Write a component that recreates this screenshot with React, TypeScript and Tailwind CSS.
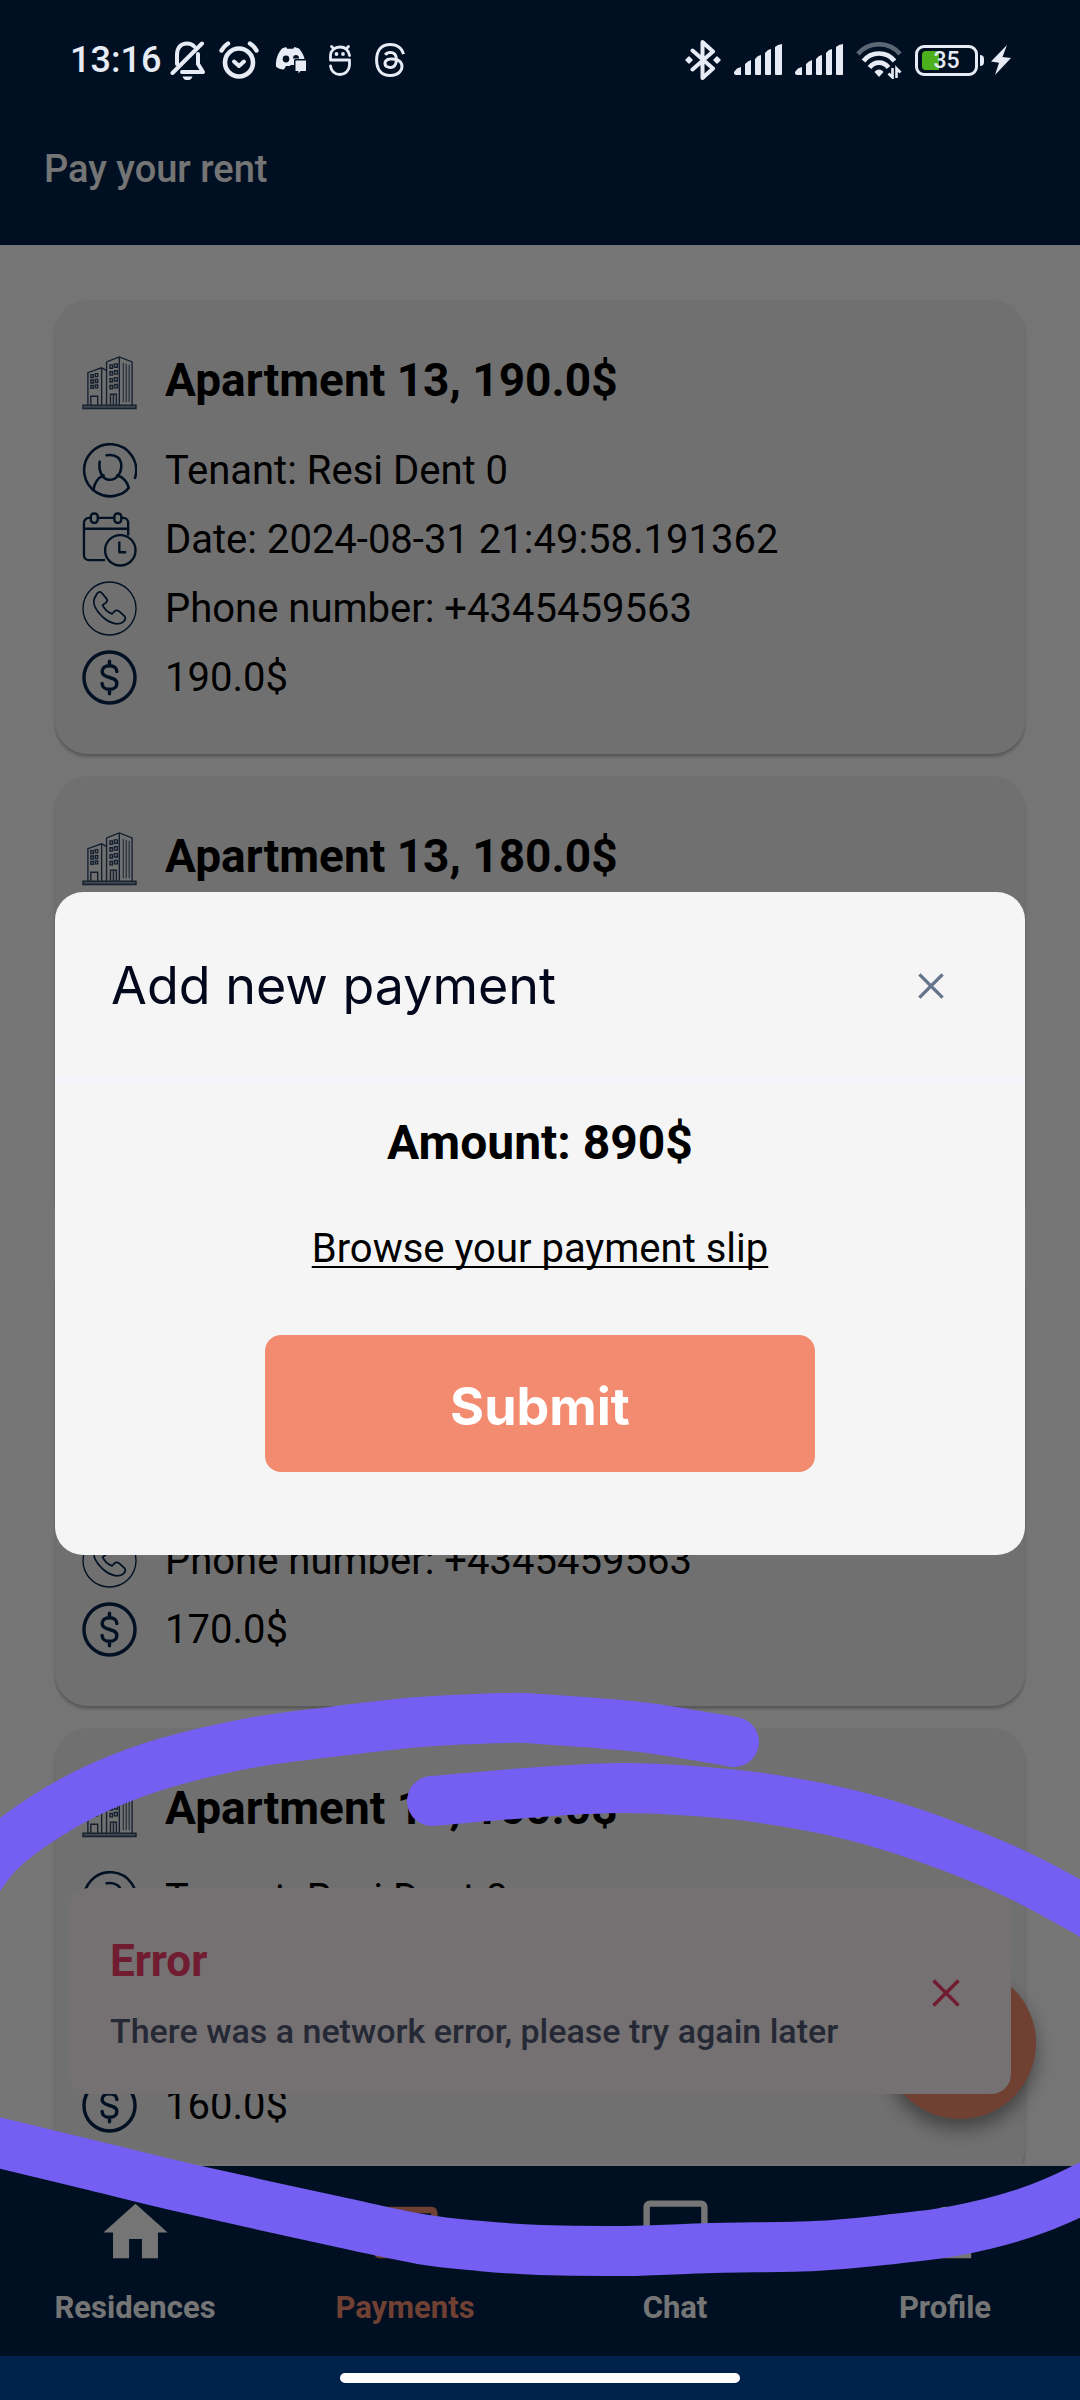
import React from "react";
import { MdChatBubbleOutline, MdHome, MdPayment, MdPerson } from "react-icons/md";
import { SiThreads } from "react-icons/si";

type IconProps = { className?: string };

/* ---------- status bar icons ---------- */

function BellOffIcon() {
  return (
    <svg viewBox="0 0 36 40" className="h-10 w-9" fill="none" stroke="currentColor" strokeLinecap="round" strokeLinejoin="round" strokeWidth="4">
      <path d="M7 24V15C7 7.500 11 3.500 17 3.500c3 0 5.500 1 7.200 3" />
      <path d="M28 14v10l5 8H12" />
      <path d="M2.500 33 32 3.500" />
      <path d="M12.500 36.500h10c-1 3-2.800 3.500-5 3.500s-4-.5-5-3.500z" fill="currentColor" stroke="none" />
    </svg>
  );
}

function AlarmIcon() {
  return (
    <svg viewBox="0 0 40 38" className="h-[38px] w-10" fill="none" stroke="currentColor" strokeLinecap="round" strokeLinejoin="round">
      <circle cx="20" cy="21.500" r="14" strokeWidth="4.600" />
      <path d="M15 20.500l5 4.500 5-4.500" strokeWidth="4" />
      <path d="M2.500 9.500c1.500-3 3.500-5 6.500-7M31 2.500c3 2 5 4 6.500 7" strokeWidth="4.400" />
    </svg>
  );
}

function DiscordMessageIcon() {
  return (
    <svg viewBox="0 0 32 28" className="h-7 w-8">
      <path fill="currentColor" d="M7 2.500 11 1l1.200 1.800h6L19.500 1l4.500 1.500c3.500 4 5 7.500 5.500 10.500H20l-1 1v5h-3.500l-.5 1h-4L9 23.500C5 23.500 2 22 1 20.500 .5 13 3 7 7 2.500z" />
      <ellipse cx="11" cy="13" rx="3.300" ry="3.400" fill="#000f22" />
      <path d="M18 12.500c0-2.500 1.200-3.500 3-3.500s3 1.300 3.200 3.500z" fill="#000f22" />
      <path fill="currentColor" d="M20.500 14.500h10.500v10.500h-5.500l-2 2.500v-2.500h-3z" />
    </svg>
  );
}

function RobotIcon() {
  return (
    <svg viewBox="0 0 22 32" className="h-8 w-[22px]" fill="none" stroke="currentColor" strokeLinecap="round" strokeWidth="2.800">
      <path d="M2.500 2.500l2 2M19.500 2.500l-2 2" />
      <path d="M20.500 11.500c-1-5-4-8.500-9.500-8.500s-9.500 4-9.500 8.500V16h19v5c0 5-4 9.500-9.500 9.500s-9-4-9.500-8.500" strokeLinejoin="round" />
      <circle cx="7.500" cy="10" r="1.900" fill="currentColor" stroke="none" />
      <circle cx="14" cy="10" r="1.900" fill="currentColor" stroke="none" />
    </svg>
  );
}

function BluetoothIcon() {
  return (
    <svg viewBox="0 0 36 40" className="h-10 w-9" fill="none" stroke="currentColor" strokeLinecap="round" strokeLinejoin="round" strokeWidth="4">
      <path d="M7.500 10.500 28 28.500l-10.500 9.500V2L28 11.500 7.500 29.500" />
      <path d="M4 17 7 20 4 23 1 20zM32 17l3 3-3 3-3-3z" fill="currentColor" strokeWidth="1.500" />
    </svg>
  );
}

function SignalIcon() {
  return (
    <svg viewBox="0 0 48 32" className="h-8 w-12" fill="currentColor">
      <path d="M0 28l3-3.500 4-1.500v8H2a2 2 0 0 1-2-2z" />
      <path d="M11 20l3-2.500 3-1.500V30a1 1 0 0 1-1 1h-4a1 1 0 0 1-1-1z" />
      <path d="M21 15l3-3 3-1V30a1 1 0 0 1-1 1h-4a1 1 0 0 1-1-1z" />
      <path d="M31 9l3-3 3-1V30a1 1 0 0 1-1 1h-4a1 1 0 0 1-1-1z" />
      <path d="M41 3l3-2 4-1v30a1 1 0 0 1-1 1h-5a1 1 0 0 1-1-1z" />
    </svg>
  );
}

function WifiIcon() {
  return (
    <svg viewBox="0 0 46 37" className="h-[37px] w-[46px]" fill="none" stroke="currentColor" strokeWidth="4.600">
      <path d="M2 12C13-1 33-1 44 12" opacity="0.4" />
      <path d="M7.500 19C15 9 31 9 38.500 19" />
      <path d="M13.500 25.500c5-6.500 14-6.500 19 0" />
      <path d="M18.500 30c2-3.500 7-3.500 9 0L23 35z" fill="currentColor" stroke="none" />
      <path d="M36.500 26v9.500l-4-4M40.500 36v-9.500l4 4" strokeWidth="2.600" />
    </svg>
  );
}

function BoltIcon() {
  return (
    <svg viewBox="0 0 20 30" className="h-[30px] w-5" fill="currentColor">
      <path d="M16 0 0 16.500l8 1.200L4 30 20 13l-8.500-1z" />
    </svg>
  );
}

function StatusBar() {
  return (
    <div className="flex items-center justify-between pt-[38px] pr-[69px] pl-[70px] text-[#e6ebf5]">
      <div className="flex h-11 items-center">
        <span className="text-4xl font-medium">13:16</span>
        <div className="ml-[9px] flex items-center gap-[13px]">
          <BellOffIcon />
          <AlarmIcon />
        </div>
        <div className="ml-4 flex items-center gap-[22px]">
          <DiscordMessageIcon />
          <RobotIcon />
          <SiThreads className="h-[34px] w-[34px]" />
        </div>
      </div>
      <div className="flex h-11 items-center gap-[13px]">
        <BluetoothIcon />
        <SignalIcon />
        <SignalIcon />
        <WifiIcon />
        <div className="flex items-center gap-[2px]">
          <div className="relative flex h-[31px] w-[63px] items-center justify-center rounded-[9px] border-3 border-current">
            <div className="absolute inset-y-[3px] left-1 w-[17px] rounded-l-[4px] bg-[#4caf1c]" />
            <span className="relative text-[23px] leading-none font-medium">35</span>
          </div>
          <div className="h-[11px] w-1 rounded-r-sm bg-current" />
          <div className="ml-[5px]">
            <BoltIcon />
          </div>
        </div>
      </div>
    </div>
  );
}

/* ---------- payment card icons ---------- */

function BuildingIcon({ className }: IconProps) {
  return (
    <svg viewBox="0 0 56 56" className={className} fill="none" stroke="currentColor" strokeWidth="1.400">
      <path d="M1 51h54v3.500H1z" fill="#8d99a8" />
      <path d="M6 51V18l14-5 5 3v35M20 13v38M25 7 38 2l13 5v44M25 7v44M38 2v49" />
      <path d="M9 51V42h7v9M29 51V40h6v11M32 40v11" />
      <path d="M42 8v40M45 9v39M48 10v38" strokeWidth="1" />
      <path d="M9 20h2.500v3H9zM13.500 19H16v3h-2.500zM9 25.500h2.500v3H9zM13.500 25H16v3h-2.500zM9 31h2.500v3H9zM13.500 30.500H16v3h-2.500z" />
      <path d="M28.500 10h2.500v3.500h-2.500zM33 9h3v3.500h-3zM28.500 17h2.500v3.500h-2.500zM33 16h3v3.500h-3zM28.500 24h2.500v3.500h-2.500zM33 23h3v3.500h-3zM28.500 31h2.500v3.500h-2.500zM33 30h3v3.500h-3z" />
    </svg>
  );
}

function TenantIcon({ className }: IconProps) {
  return (
    <svg viewBox="0 0 56 56" className={className} fill="none" stroke="currentColor" strokeWidth="2.600" strokeLinecap="round" strokeLinejoin="round">
      <path d="M54 35.500A26.500 26.500 0 1 0 38 52.500C42 51 45.500 48.500 47.500 45.500" />
      <path d="M18 19c-1.500 10 3 18.500 10 18.500S40 31 40 23.500 35 11 25 12.500" />
      <path d="M11.500 48c1-6 4.500-12.500 10.500-15M36 33c6 1.500 10.500 7 11.500 12.500" />
    </svg>
  );
}

function CalendarClockIcon({ className }: IconProps) {
  return (
    <svg viewBox="0 0 56 56" className={className} fill="none" stroke="currentColor" strokeWidth="2.400" strokeLinejoin="round">
      <path d="M9 6H7a5 5 0 0 0-5 5v33a5 5 0 0 0 5 5h16.500M16 6h17M40 6h2a5 5 0 0 1 5 5v13M2 17h45" />
      <rect x="9" y="1.500" width="7" height="9.500" rx="3" />
      <rect x="33" y="1.500" width="7" height="9.500" rx="3" />
      <circle cx="39" cy="39" r="15.500" />
      <path d="M38 30v11h7" />
    </svg>
  );
}

function PhoneIcon({ className }: IconProps) {
  return (
    <svg viewBox="0 0 56 56" className={className} fill="none" stroke="currentColor" strokeLinejoin="round">
      <circle cx="28" cy="28" r="27" strokeWidth="1.400" />
      <path d="M13 17c-3 6 2 14 8.500 20s16 9 21 4c2.500-2.500 2-4 .5-5.500L38 31c-2-1.500-3.500-1.500-5 0l-2.500 2.500C27 32 22.500 28 21 24.500l3.500-2.500c1.500-1.500 1.500-2.500.5-4l-5-6c-1.500-1.500-3-1-4.500.5z" strokeWidth="1.800" />
    </svg>
  );
}

function DollarIcon({ className }: IconProps) {
  return (
    <svg viewBox="0 0 56 56" className={className} fill="none" stroke="currentColor" strokeWidth="3.500" strokeLinecap="round">
      <circle cx="28" cy="28" r="26" />
      <path d="M35.500 22c0-3.500-3-6-7.500-6s-7.500 2.500-7.500 6 3 5 7.500 6 7.500 2.500 7.500 6-3 6-7.500 6-7.500-2.500-7.500-6M28 11.500V16M28 40v4.500" />
    </svg>
  );
}

type Payment = {
  apartment: string;
  tenant: string;
  date: string;
  phone: string;
  amount: string;
};

const payments: Payment[] = ["190.0$", "180.0$", "170.0$", "160.0$"].map((amount) => ({
  apartment: "Apartment 13",
  tenant: "Resi Dent 0",
  date: "2024-08-31 21:49:58.191362",
  phone: "+4345459563",
  amount,
}));

function CardRow({ icon: Icon, text }: { icon: (p: IconProps) => React.ReactElement; text: string }) {
  return (
    <li className="flex items-center gap-7">
      <Icon className="h-[55px] w-[55px] shrink-0 text-[#03254d]" />
      <span className="text-[40px] leading-[55px]">{text}</span>
    </li>
  );
}

function PaymentCard({ payment }: { payment: Payment }) {
  return (
    <article className="shrink-0 rounded-[33px] bg-[#f3f3f3] px-[27px] pt-[55px] pb-[49px] text-black shadow-[0_3px_3px_rgba(0,0,0,0.25)]">
      <h2 className="mb-[33px] flex items-start gap-7">
        <BuildingIcon className="h-[55px] w-[55px] shrink-0 text-[#2c4666]" />
        <span className="text-[46px] leading-[50px] font-bold">
          {payment.apartment}, {payment.amount}
        </span>
      </h2>
      <ul className="flex flex-col gap-[14px]">
        <CardRow icon={TenantIcon} text={`Tenant: ${payment.tenant}`} />
        <CardRow icon={CalendarClockIcon} text={`Date: ${payment.date}`} />
        <CardRow icon={PhoneIcon} text={`Phone number: ${payment.phone}`} />
        <CardRow icon={DollarIcon} text={payment.amount} />
      </ul>
    </article>
  );
}

/* ---------- overlays ---------- */

function CloseIcon({ className }: IconProps) {
  return (
    <svg viewBox="0 0 28 28" className={className} fill="none" stroke="currentColor" strokeWidth="3.600">
      <path d="M1.500 1.500l25 25M26.500 1.500l-25 25" />
    </svg>
  );
}

function ErrorToast() {
  return (
    <div role="alert" className="absolute inset-x-[69px] bottom-[72px] flex items-center justify-between rounded-[20px] bg-[#fef5f6] px-[41px] pt-[46px] pb-[42px]">
      <div>
        <p className="text-[44px] leading-[54px] font-bold text-[#f43f6b]">Error</p>
        <p className="mt-[22px] text-[34px] leading-[42px] font-medium text-[#525a74]">
          There was a network error, please try again later
        </p>
      </div>
      <button type="button" aria-label="Dismiss error" className="p-[10px] text-[#f43f6b]">
        <CloseIcon className="h-7 w-7" />
      </button>
    </div>
  );
}

function AddPaymentDialog() {
  return (
    <div role="dialog" aria-labelledby="dialog-title" className="w-full rounded-[28px] bg-[#f5f5f5] pb-[83px]">
      <div className="flex items-center justify-between border-b-4 border-[#f3f3fc] px-14 pt-[58px] pb-[56px]">
        <h2 id="dialog-title" className="font-['Inter',sans-serif] text-[52px] leading-[72px] text-[#03071c]">
          Add new payment
        </h2>
        <button type="button" aria-label="Close" className="mr-[11px] p-[14px] text-[#64748b]">
          <CloseIcon className="h-[26px] w-[26px]" />
        </button>
      </div>
      <div className="flex flex-col items-center">
        <p className="mt-[29px] text-[48px] leading-[64px] font-bold text-black">Amount: 890$</p>
        <a href="#browse" className="mt-[49px] text-[40px] leading-[50px] text-black underline decoration-2 underline-offset-4 [text-decoration-skip-ink:none]">
          Browse your payment slip
        </a>
        <button type="button" className="mt-[61px] h-[137px] w-[550px] max-w-full rounded-2xl bg-[#f38b70] pt-1.5 font-['Inter',sans-serif] text-[52px] font-bold text-white">
          Submit
        </button>
      </div>
    </div>
  );
}

const tabs = [
  { label: "Residences", icon: MdHome },
  { label: "Payments", icon: MdPayment },
  { label: "Chat", icon: MdChatBubbleOutline },
  { label: "Profile", icon: MdPerson },
];

function TabBar() {
  return (
    <nav className="grid h-[190px] shrink-0 grid-cols-4 bg-[#00234b]">
      {tabs.map(({ label, icon: Icon }) => (
        <a
          key={label}
          href={`#${label.toLowerCase()}`}
          aria-current={label === "Payments" ? "page" : undefined}
          className="flex flex-col items-center pt-7 text-white aria-[current=page]:text-[#f38b70]"
        >
          <Icon className="h-[77px] w-[77px]" />
          <span className="mt-[17px] text-[31px] leading-10 font-bold">{label}</span>
        </a>
      ))}
    </nav>
  );
}

/* ---------- freehand annotation ---------- */

const stroke: [number, number][] = [
  [734, 1742], [640, 1727], [540, 1719], [506, 1718], [420, 1722], [330, 1732], [250, 1743], [165, 1763],
  [100, 1787], [45, 1817], [0, 1851], [-30, 1890], [-90, 1970], [-120, 2080], [-60, 2128], [0, 2143], [95, 2166],
  [190, 2189], [344, 2223], [420, 2239], [480, 2246], [540, 2250], [626, 2251], [712, 2248], [815, 2246],
  [884, 2240], [954, 2231], [1022, 2214], [1080, 2190], [1130, 2160], [1220, 2060], [1180, 1970], [1130, 1938],
  [1080, 1908], [1022, 1877], [954, 1848], [884, 1824], [815, 1807], [729, 1794], [626, 1788], [540, 1792],
  [432, 1801],
];

function smoothPath(points: [number, number][]) {
  const at = (i: number) => points[Math.max(0, Math.min(points.length - 1, i))];
  return points.slice(1).reduce((d, p, i) => {
    const [a, b, c] = [at(i - 1), at(i), at(i + 2)];
    const c1 = [b[0] + (p[0] - a[0]) / 6, b[1] + (p[1] - a[1]) / 6];
    const c2 = [p[0] - (c[0] - b[0]) / 6, p[1] - (c[1] - b[1]) / 6];
    return `${d}C${c1.join(" ")} ${c2.join(" ")} ${p.join(" ")}`;
  }, `M${points[0].join(" ")}`);
}

function Scribble() {
  return (
    <svg viewBox="0 0 1080 2400" preserveAspectRatio="none" aria-hidden="true" className="pointer-events-none absolute inset-0 h-full w-full">
      <path d={smoothPath(stroke)} fill="none" stroke="#745ff2" strokeWidth="50" strokeLinecap="round" strokeLinejoin="round" />
    </svg>
  );
}

export default function App() {
  return (
    <div className="relative flex h-screen flex-col overflow-hidden bg-white font-['Roboto',sans-serif]">
      <div className="relative flex min-h-0 flex-1 flex-col">
        <header className="h-[245px] shrink-0 bg-[#00234b] px-11 pt-[143px]">
          <h1 className="text-[38px] leading-[52px] font-medium text-white">Pay your rent</h1>
        </header>
        <main className="relative min-h-0 flex-1">
          <div className="flex h-full flex-col gap-[22px] overflow-hidden border-b-2 border-white px-[55px] pt-[55px]">
            {payments.map((payment) => (
              <PaymentCard key={payment.amount} payment={payment} />
            ))}
          </div>
          <button type="button" aria-label="Add payment" className="absolute right-11 bottom-[47px] flex h-[152px] w-[152px] items-center justify-center rounded-full bg-[#f38b70] shadow-[0_10px_18px_rgba(0,0,0,0.4)]" />
          <ErrorToast />
        </main>
        <TabBar />
        <div className="absolute inset-0 flex items-center bg-black/54 px-[55px] pt-[91px]">
          <AddPaymentDialog />
        </div>
        <div className="absolute inset-x-0 top-0">
          <StatusBar />
        </div>
      </div>
      <div className="flex h-11 shrink-0 items-center justify-center bg-[#00234b]">
        <div className="h-[10px] w-[400px] rounded-full bg-white" />
      </div>
      <Scribble />
    </div>
  );
}
